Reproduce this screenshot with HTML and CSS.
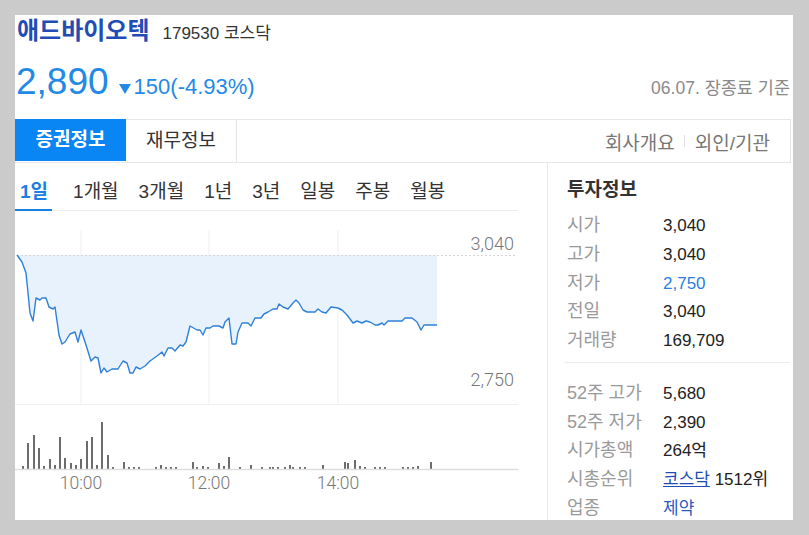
FILE: index.html
```html
<!DOCTYPE html>
<html lang="ko">
<head>
    <meta charset="UTF-8">
    <title>애드바이오텍 179530 코스닥</title>
    <link rel="stylesheet" href="styles.css">
</head>
<body>

<div class="card">

    <!-- Stock name and price -->
    <div class="title-row">
        <span class="stock-name">애드바이오텍</span>
        <span class="stock-code">179530 코스닥</span>
    </div>
    <div class="price-row">
        <span class="price">2,890</span>
        <span class="arrow-down"></span>
        <span class="change">150(-4.93%)</span>
        <span class="asof">06.07. 장종료 기준</span>
    </div>

    <!-- Main tabs -->
    <div class="tabs">
        <div class="tab tab-active">증권정보</div>
        <div class="tab">재무정보</div>
        <div class="tab-links">
            <span>회사개요</span>
            <span class="divider"></span>
            <span>외인/기관</span>
        </div>
    </div>

    <div class="body">
        <!-- Chart column -->
        <div class="chart-col">
            <div class="periods">
                <span class="period period-active">1일</span>
                <span class="period">1개월</span>
                <span class="period">3개월</span>
                <span class="period">1년</span>
                <span class="period">3년</span>
                <span class="period">일봉</span>
                <span class="period">주봉</span>
                <span class="period">월봉</span>
            </div>
            <svg class="chart" width="503" height="290" viewBox="15 211 503 290">
                <!-- grid -->
                <line x1="81" y1="230" x2="81" y2="404" class="grid"/>
                <line x1="209" y1="230" x2="209" y2="404" class="grid"/>
                <line x1="338" y1="230" x2="338" y2="404" class="grid"/>
                <line x1="15" y1="404.5" x2="518" y2="404.5" class="grid"/>

                <!-- price area -->
                <path class="area" d="M17,255 L22,262 26,273 30,313 33,321 36,298 40,300 42,298 46,298 49,307 53,309 55,307 59,335 62,344 65,342 70,334 75,332 78,342 81,330 86,345 91,361 95,357 98,358 101,373 104,368 107,372 112,369 118,369 123,361 127,363 130,373 133,373 136,367 140,369 145,366 150,361 157,356 162,352 164,356 168,348 172,348 175,351 180,345 183,346 186,342 190,326 197,330 200,330 203,335 206,328 210,328 213,326 219,326 223,328 225,322 229,318 232,344 236,344 238,332 242,323 248,323 251,326 255,318 261,318 264,314 268,312 273,309 277,309 279,304 283,307 288,309 293,303 296,300 299,303 303,310 307,312 315,312 318,309 322,312 326,313 331,307 338,308 342,310 347,315 353,323 357,321 362,323 366,321 370,322 375,325 378,325 382,323 384,325 388,321 402,321 405,318 412,318 417,322 421,330 424,325 437,325 L437,255 Z"/>
                <line x1="17" y1="255.5" x2="517" y2="255.5" class="dash"/>
                <path class="line" d="M17,255 L22,262 26,273 30,313 33,321 36,298 40,300 42,298 46,298 49,307 53,309 55,307 59,335 62,344 65,342 70,334 75,332 78,342 81,330 86,345 91,361 95,357 98,358 101,373 104,368 107,372 112,369 118,369 123,361 127,363 130,373 133,373 136,367 140,369 145,366 150,361 157,356 162,352 164,356 168,348 172,348 175,351 180,345 183,346 186,342 190,326 197,330 200,330 203,335 206,328 210,328 213,326 219,326 223,328 225,322 229,318 232,344 236,344 238,332 242,323 248,323 251,326 255,318 261,318 264,314 268,312 273,309 277,309 279,304 283,307 288,309 293,303 296,300 299,303 303,310 307,312 315,312 318,309 322,312 326,313 331,307 338,308 342,310 347,315 353,323 357,321 362,323 366,321 370,322 375,325 378,325 382,323 384,325 388,321 402,321 405,318 412,318 417,322 421,330 424,325 437,325"/>

                <text x="514" y="250" class="axis" text-anchor="end">3,040</text>
                <text x="514" y="386" class="axis" text-anchor="end">2,750</text>

                <!-- volume -->
                <g class="bars" id="bars"></g>
                <line x1="15" y1="469.5" x2="518" y2="469.5" class="base"/>

                <text x="81" y="489" class="axis time" text-anchor="middle">10:00</text>
                <text x="209" y="489" class="axis time" text-anchor="middle">12:00</text>
                <text x="338" y="489" class="axis time" text-anchor="middle">14:00</text>
            </svg>
        </div>

        <!-- Investment info -->
        <div class="info">
            <h3>투자정보</h3>
            <div class="row"><span class="label">시가</span><span class="value">3,040</span></div>
            <div class="row"><span class="label">고가</span><span class="value">3,040</span></div>
            <div class="row"><span class="label">저가</span><span class="value low">2,750</span></div>
            <div class="row"><span class="label">전일</span><span class="value">3,040</span></div>
            <div class="row"><span class="label">거래량</span><span class="value">169,709</span></div>
            <div class="sep"></div>
            <div class="row"><span class="label">52주 고가</span><span class="value">5,680</span></div>
            <div class="row"><span class="label">52주 저가</span><span class="value">2,390</span></div>
            <div class="row"><span class="label">시가총액</span><span class="value">264억</span></div>
            <div class="row"><span class="label">시총순위</span><span class="value"><a class="link">코스닥</a> 1512위</span></div>
            <div class="row"><span class="label">업종</span><span class="value"><span class="sector">제약</span></span></div>
        </div>
    </div>

</div>

<script>
// volume bars: [x, top], baseline at 469
const volumes = [
    [23,466],[28,443],[34,435],[39,448],[44,466],[50,459],[55,465],[60,437],[65,458],[71,463],
    [76,465],[81,459],[87,441],[92,437],[97,465],[102,422],[108,455],[113,467],[124,462],[129,467],
    [134,467],[139,467],[156,467],[161,465],[166,467],[171,467],[176,467],[193,462],[197,467],[203,466],
    [208,467],[219,463],[224,466],[229,457],[240,467],[251,465],[262,467],[270,467],[273,467],[278,467],
    [285,467],[290,465],[293,467],[300,467],[305,467],[323,465],[345,462],[348,463],[355,460],[360,466],
    [365,467],[375,467],[380,467],[385,467],[403,467],[408,467],[413,467],[418,466],[431,462]
];

const bars = document.getElementById('bars');
volumes.forEach(v => {
    const r = document.createElementNS('http://www.w3.org/2000/svg', 'rect');
    r.setAttribute('x', v[0] - 1);
    r.setAttribute('y', v[1]);
    r.setAttribute('width', 2);
    r.setAttribute('height', 469 - v[1]);
    bars.appendChild(r);
});
</script>

</body>
</html>
```

FILE: styles.css
```css
body {
    margin: 0;
    padding: 15px 16px 15px 15px;
    background-color: #cbcbcb;
    font-family: 'Liberation Sans', 'Noto Sans CJK KR', sans-serif;
    color: #333;
}

.card {
    background-color: #fff;
    height: 505px;
    overflow: hidden;
}

.title-row {
    display: flex;
    align-items: baseline;
    padding-left: 2px;
    line-height: 32px;
}

.stock-name {
    font-size: 24px;
    font-weight: bold;
    color: #1f4db5;
}

.stock-code {
    font-size: 17px;
    color: #333;
    margin-left: 13px;
}

.price-row {
    display: flex;
    align-items: baseline;
    padding-left: 1px;
    margin-top: 6px;
    line-height: 52px;
    color: #2389e6;
}

.price {
    font-size: 37px;
}

.arrow-down {
    width: 0;
    height: 0;
    border-left: 6px solid transparent;
    border-right: 6px solid transparent;
    border-top: 10px solid #2389e6;
    margin-left: 10px;
    margin-right: 3px;
}

.change {
    font-size: 22px;
}

.asof {
    margin-left: auto;
    margin-right: 3px;
    font-size: 17.5px;
    color: #8a8a8a;
}

.tabs {
    display: flex;
    height: 42px;
    margin-top: 5px;
    margin-right: 2px;
    border-top: 1px solid #e6e6e6;
    border-right: 1px solid #e6e6e6;
    border-bottom: 1px solid #e6e6e6;
}

.tab {
    width: 110px;
    line-height: 42px;
    text-align: center;
    font-size: 19px;
    color: #333;
    border-right: 1px solid #e3e3e3;
}

.tab-active {
    width: 111px;
    height: 42px;
    margin-top: -1px;
    background-color: #0a85f4;
    border-right: 0;
    color: #fff;
    font-weight: bold;
}

.tab-links {
    margin-left: auto;
    display: flex;
    align-items: center;
    padding-right: 20px;
    font-size: 19px;
    color: #777;
}

.divider {
    width: 1px;
    height: 12px;
    background-color: #ddd;
    margin: 0 10px 0 9px;
}

.body {
    display: flex;
}

.chart-col {
    width: 532px;
}

.periods {
    display: flex;
    gap: 20px;
    width: 503px;
    padding-top: 17px;
    border-bottom: 1px solid #ececec;
}

.period {
    font-size: 19px;
    line-height: 24px;
    padding-bottom: 5px;
    border-bottom: 2px solid transparent;
    margin-bottom: -1px;
    color: #333;
}

.period-active {
    padding: 0 4px 5px 5px;
    margin-right: 1px;
    border-bottom-color: #1a7fe0;
    color: #1a7fe0;
    font-weight: bold;
}

.chart {
    display: block;
}

.grid {
    stroke: #efefef;
    stroke-width: 1;
}

.dash {
    stroke: #d6d6d6;
    stroke-width: 1;
    stroke-dasharray: 2 2;
}

.area {
    fill: #e7f2fd;
}

.line {
    fill: none;
    stroke: #2f80d8;
    stroke-width: 1.4;
    stroke-linejoin: round;
}

.bars rect {
    fill: #6c6c6c;
}

.base {
    stroke: #dedede;
    stroke-width: 1.5;
}

.axis {
    font-family: Roboto, 'Liberation Sans', sans-serif;
    font-weight: 300;
    font-size: 18px;
    fill: #777;
}

.time {
    font-size: 17.5px;
}

.info {
    flex: 1;
    border-left: 1px solid #e8e8e8;
    padding: 15px 3px 0 19px;
}

.info h3 {
    margin: 0 0 9px 0;
    font-size: 19px;
    line-height: 24px;
    color: #333;
}

.row {
    display: flex;
    align-items: baseline;
    height: 28.75px;
    line-height: 28.75px;
    font-size: 17px;
}

.label {
    width: 96px;
    font-size: 18px;
    color: #9a9a9a;
}

.value {
    color: #222;
}

.low {
    color: #2a7fe0;
}

.link {
    color: #1f4db5;
    text-decoration: underline;
}

.sector {
    color: #2a5bbf;
}

.sep {
    height: 1px;
    background-color: #ececec;
    margin: 7px 0 16px -2px;
}
```
